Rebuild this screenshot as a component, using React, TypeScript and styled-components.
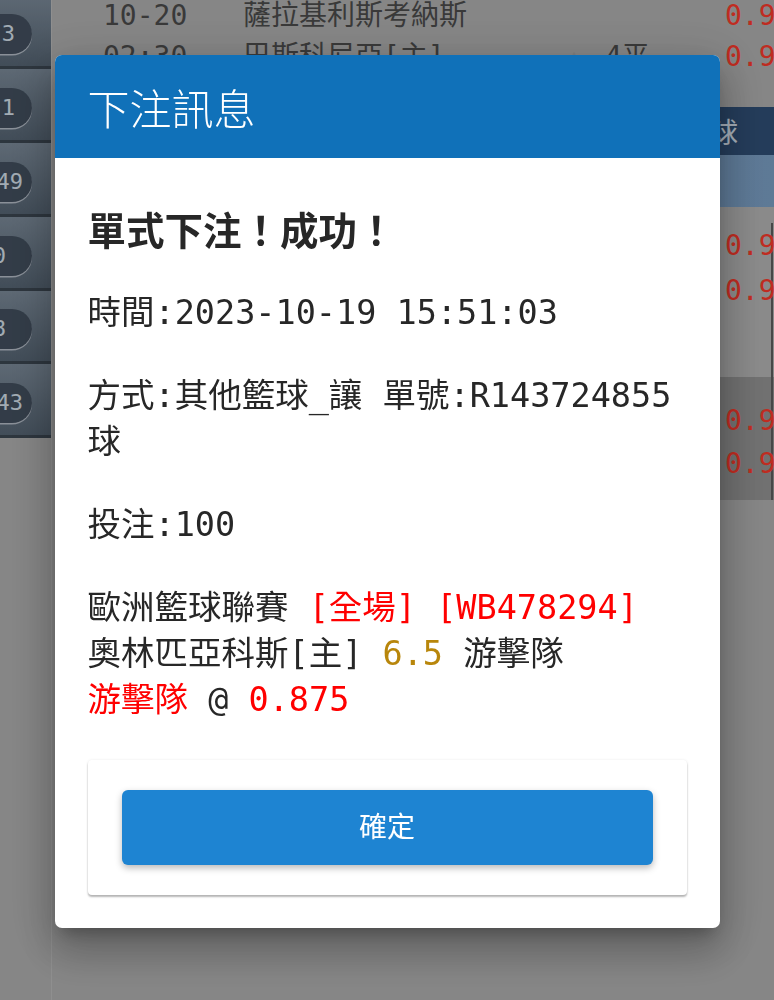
import React from 'react';
import styled, { createGlobalStyle } from 'styled-components';

const GlobalStyle = createGlobalStyle`
  html, body {
    margin: 0;
    padding: 0;
  }
  body {
    width: 774px;
    height: 1000px;
    overflow: hidden;
    background: #b3b3b3;
    font-family: "Noto Sans CJK TC", "Noto Sans", sans-serif;
  }
`;

const MONO = `"DejaVu Sans Mono", "Noto Sans CJK TC", monospace`;

/* ---------- page behind the dialog ---------- */

const Page = styled.div`
  display: grid;
  grid-template-columns: 52px minmax(0, 1fr);
  width: 774px;
  height: 1000px;
  overflow: hidden;
  background: #b3b3b3;
`;

const Sidebar = styled.div`
  display: flex;
  flex-direction: column;
  margin-top: -4.5px;
  background: #b3b3b3;
  border-right: 1px solid #bfbfbf;
`;

const SideItem = styled.div`
  box-sizing: border-box;
  height: 73.75px;
  padding-top: 7px;
  display: flex;
  align-items: center;
  background: linear-gradient(to bottom, #7d8c9b, #586776);
  border-bottom: 3px solid #3d4853;
  overflow: hidden;
`;

const CountPill = styled.div<{ $inset: number }>`
  box-sizing: border-box;
  width: 60px;
  height: 40px;
  margin-left: -28px;
  padding-right: ${(p) => p.$inset}px;
  border-radius: 20px;
  background: #445160;
  box-shadow: 0 1.5px 0 #b8c0cb;
  color: #d9e4ef;
  font: 22px/40px ${MONO};
  text-align: right;
`;

const Main = styled.div`
  display: flex;
  flex-direction: column;
  min-width: 0;
  padding-left: 3px;
`;

const MatchBlock = styled.div<{
  $tone: string;
  $height: number;
  $padTop: number;
  $shift?: number;
  $edgeTop?: number;
}>`
  box-sizing: border-box;
  height: ${(p) => p.$height}px;
  margin-top: ${(p) => p.$shift ?? 0}px;
  padding-top: ${(p) => p.$padTop}px;
  background: ${(p) =>
    p.$edgeTop === undefined
      ? p.$tone
      : `linear-gradient(#5f5f5f, #5f5f5f) right 1px top ${p.$edgeTop}px / 2px calc(100% - ${p.$edgeTop}px) no-repeat, ${p.$tone}`};
`;

const MatchRow = styled.div<{ $h: number }>`
  display: grid;
  grid-template-columns: 140px 277px 85px 120px minmax(0, 1fr);
  padding-left: 48px;
  height: ${(p) => p.$h}px;
  line-height: ${(p) => p.$h}px;
  font-size: 28px;
  font-family: ${MONO};
  color: #4d4d4d;
  white-space: nowrap;
  overflow: hidden;
`;

const Mark = styled.span`
  font-size: 20px;
  color: #a8a8a8;
  padding-left: 48px;
`;

const Odds = styled.span`
  color: #ff3b2c;
`;

const LeagueBar = styled.div`
  height: 48px;
  display: flex;
  align-items: center;
  justify-content: flex-end;
  padding-right: 36px;
  background: #315179;
  color: #dde8f5;
  font-size: 28px;
  white-space: nowrap;
  overflow: hidden;
`;

const ColumnBar = styled.div`
  height: 52px;
  background: linear-gradient(to right, #6a91b9, #7ea3c9);
`;

/* ---------- dialog ---------- */

const Backdrop = styled.div`
  position: fixed;
  inset: 0;
  display: flex;
  justify-content: center;
  align-items: flex-start;
  padding-top: 55px;
  background: rgba(0, 0, 0, 0.25);
`;

const Dialog = styled.div`
  width: 665px;
  border-radius: 7px;
  overflow: hidden;
  background: #fff;
  box-shadow: 0 11px 15px -7px rgba(0, 0, 0, 0.25), 0 24px 38px 3px rgba(0, 0, 0, 0.18),
    0 9px 46px 8px rgba(0, 0, 0, 0.14);
`;

const DialogHeader = styled.div`
  height: 103px;
  display: flex;
  align-items: center;
  padding: 0 33px;
  background: #1071b9;
  color: #fff;
  font-size: 42px;
  font-weight: 300;
`;

const DialogBody = styled.div`
  padding: 47px 33px 33px;
  color: #272727;
`;

const Heading = styled.h2`
  margin: 0 0 39px;
  font-family: "Noto Sans CJK TC", sans-serif;
  font-size: 38.5px;
  line-height: 46px;
  font-weight: 700;
`;

const Line = styled.p`
  margin: 0 0 37px;
  font-family: ${MONO};
  font-size: 33.5px;
  line-height: 46px;
  white-space: nowrap;
`;

const Red = styled.span`
  color: #ff0000;
`;

const Gold = styled.span`
  color: #b8860b;
`;

const ActionCard = styled.div`
  padding: 30px 34px;
  border-radius: 4px;
  background: #fff;
  box-shadow: 0 2px 2px rgba(0, 0, 0, 0.28), 0 0 3px rgba(0, 0, 0, 0.08);
`;

const ConfirmButton = styled.button`
  display: block;
  width: 100%;
  height: 75px;
  padding: 0 0 6px;
  border: none;
  border-radius: 6px;
  background: #1e84d2;
  color: #fff;
  font-family: "Noto Sans CJK TC", sans-serif;
  font-size: 28px;
  font-weight: 400;
  box-shadow: 0 3px 7px rgba(0, 0, 0, 0.28);
  cursor: pointer;
`;

const sideItems = [
  { count: '3', inset: 17 },
  { count: '1', inset: 17 },
  { count: '49', inset: 9 },
  { count: '0', inset: 26 },
  { count: '8', inset: 26 },
  { count: '43', inset: 9 },
];

export default function App() {
  return (
    <>
      <GlobalStyle />
      <Page>
        <Sidebar>
          {sideItems.map((s, i) => (
            <SideItem key={i}>
              <CountPill $inset={s.inset}>{s.count}</CountPill>
            </SideItem>
          ))}
        </Sidebar>
        <Main>
          <MatchBlock $tone="#b3b3b3" $height={112.5} $padTop={0} $shift={-5.5}>
            <MatchRow $h={41}>
              <span>10-20</span>
              <span>薩拉基利斯考納斯</span>
              <span />
              <span />
              <Odds>0.95</Odds>
            </MatchRow>
            <MatchRow $h={41}>
              <span>02:30</span>
              <span>巴斯科尼亞[主]</span>
              <Mark>▲</Mark>
              <span>4平</span>
              <Odds>0.91</Odds>
            </MatchRow>
          </MatchBlock>
          <LeagueBar>歐洲籃球聯賽 讓球</LeagueBar>
          <ColumnBar />
          <MatchBlock $tone="#b9b9b9" $height={170} $padTop={15.5} $edgeTop={16}>
            <MatchRow $h={45}>
              <span>10-19</span>
              <span>奧林匹亞科斯[主]</span>
              <span />
              <span>6.5</span>
              <Odds>0.92</Odds>
            </MatchRow>
            <MatchRow $h={45}>
              <span>19:45</span>
              <span>游擊隊</span>
              <span />
              <span />
              <Odds>0.94</Odds>
            </MatchRow>
          </MatchBlock>
          <MatchBlock $tone="#979797" $height={123} $padTop={21.5} $edgeTop={0}>
            <MatchRow $h={43}>
              <span>10-19</span>
              <span>摩納哥[主]</span>
              <span />
              <span>3.5</span>
              <Odds>0.93</Odds>
            </MatchRow>
            <MatchRow $h={43}>
              <span>20:00</span>
              <span>巴塞隆拿</span>
              <span />
              <span />
              <Odds>0.93</Odds>
            </MatchRow>
          </MatchBlock>
        </Main>
      </Page>

      <Backdrop>
        <Dialog>
          <DialogHeader>下注訊息</DialogHeader>
          <DialogBody>
            <Heading>單式下注！成功！</Heading>
            <Line>時間:2023-10-19 15:51:03</Line>
            <Line>
              方式:其他籃球_讓 單號:R143724855
              <br />球
            </Line>
            <Line>投注:100</Line>
            <Line>
              歐洲籃球聯賽 <Red>[全場]</Red> <Red>[WB478294]</Red>
              <br />
              奧林匹亞科斯[主] <Gold>6.5</Gold> 游擊隊
              <br />
              <Red>游擊隊</Red> @ <Red>0.875</Red>
            </Line>
            <ActionCard>
              <ConfirmButton type="button">確定</ConfirmButton>
            </ActionCard>
          </DialogBody>
        </Dialog>
      </Backdrop>
    </>
  );
}
